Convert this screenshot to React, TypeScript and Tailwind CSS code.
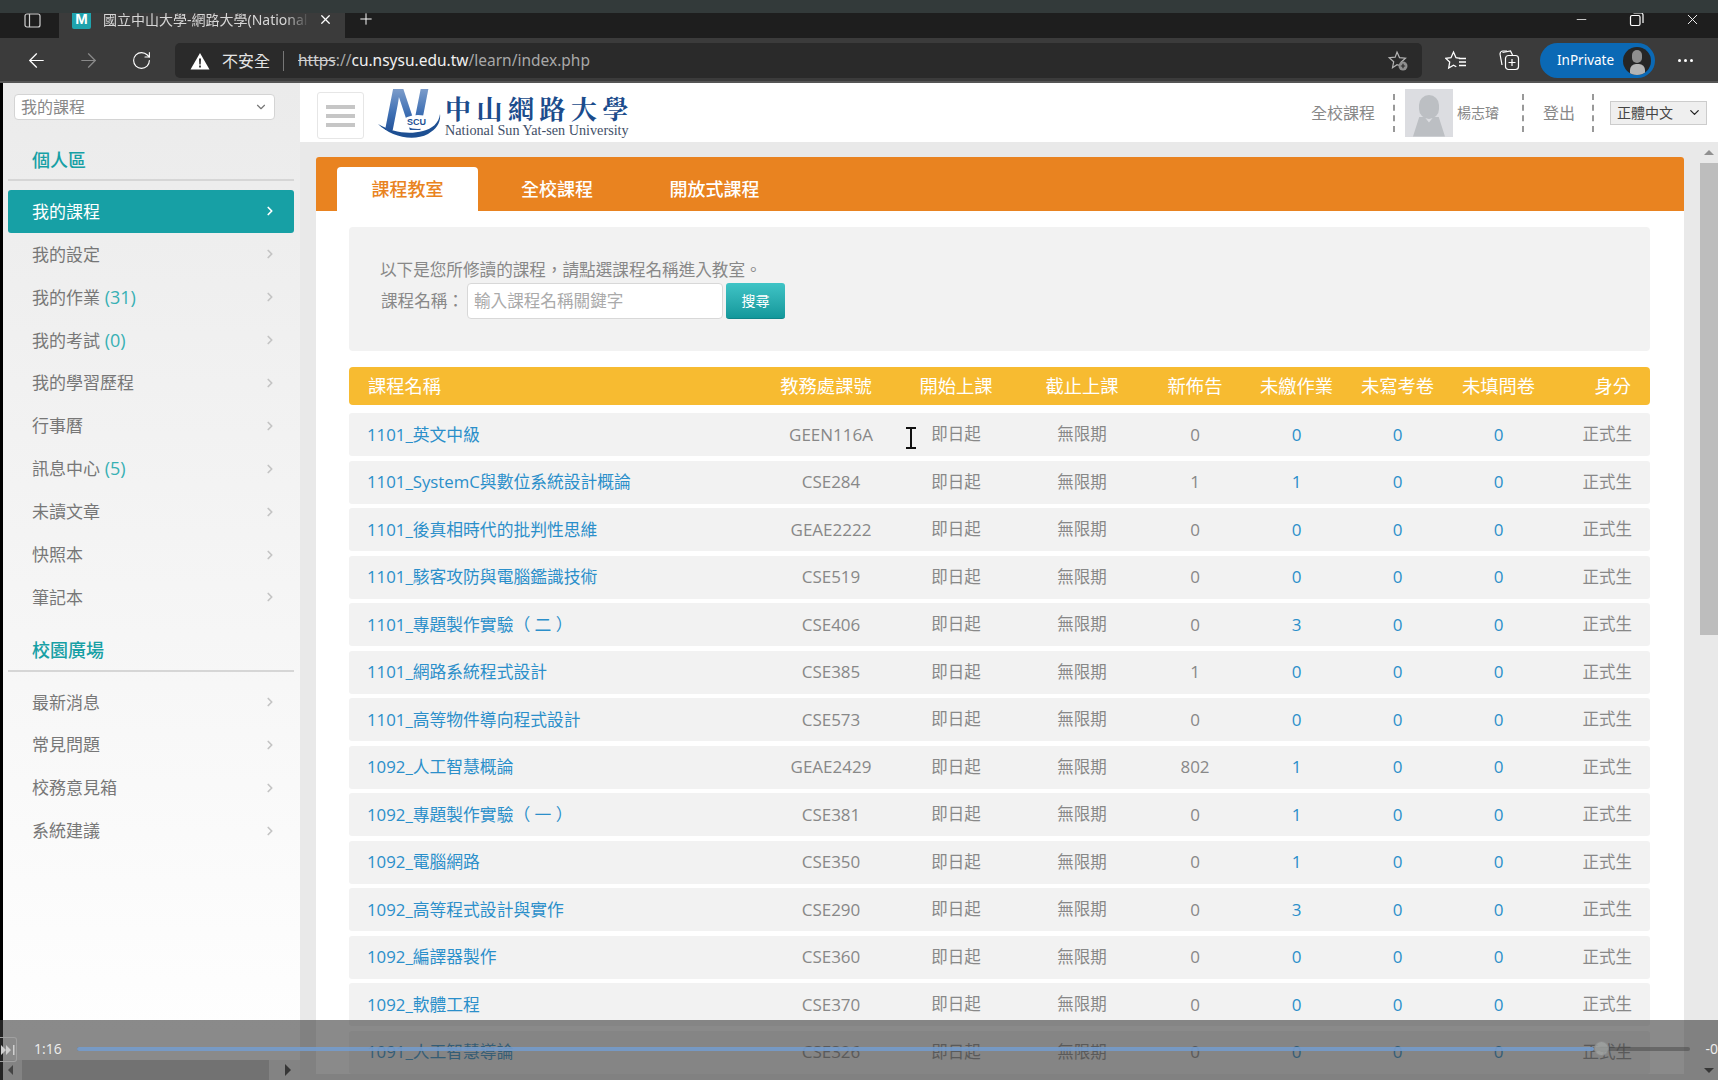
import {
  ArrowLeft,
  ArrowRight,
  ChevronDown,
  ChevronRight,
  Minus,
  Plus,
  RotateCw,
  X,
} from "lucide-react";

const cjk = `font-['Open_Sans','Noto_Sans_CJK_TC',sans-serif]`;

const personalItems = [
  { label: "我的課程", active: true },
  { label: "我的設定" },
  { label: "我的作業", count: "(31)" },
  { label: "我的考試", count: "(0)" },
  { label: "我的學習歷程" },
  { label: "行事曆" },
  { label: "訊息中心", count: "(5)" },
  { label: "未讀文章" },
  { label: "快照本" },
  { label: "筆記本" },
];

const campusItems = [
  { label: "最新消息" },
  { label: "常見問題" },
  { label: "校務意見箱" },
  { label: "系統建議" },
];

const courses = [
  { name: "1101_英文中級", code: "GEEN116A", notice: "0", hw: "0" },
  { name: "1101_SystemC與數位系統設計概論", code: "CSE284", notice: "1", hw: "1" },
  { name: "1101_後真相時代的批判性思維", code: "GEAE2222", notice: "0", hw: "0" },
  { name: "1101_駭客攻防與電腦鑑識技術", code: "CSE519", notice: "0", hw: "0" },
  { name: "1101_專題製作實驗（ 二 ）", code: "CSE406", notice: "0", hw: "3" },
  { name: "1101_網路系統程式設計", code: "CSE385", notice: "1", hw: "0" },
  { name: "1101_高等物件導向程式設計", code: "CSE573", notice: "0", hw: "0" },
  { name: "1092_人工智慧概論", code: "GEAE2429", notice: "802", hw: "1" },
  { name: "1092_專題製作實驗（ 一 ）", code: "CSE381", notice: "0", hw: "1" },
  { name: "1092_電腦網路", code: "CSE350", notice: "0", hw: "1" },
  { name: "1092_高等程式設計與實作", code: "CSE290", notice: "0", hw: "3" },
  { name: "1092_編譯器製作", code: "CSE360", notice: "0", hw: "0" },
  { name: "1092_軟體工程", code: "CSE370", notice: "0", hw: "0" },
  { name: "1091_人工智慧導論", code: "CSE326", notice: "0", hw: "0" },
];

const tableCols = "grid grid-cols-[419px_124px_128px_124px_102px_101px_101px_101px_1fr] items-center";

const SideItem = ({ label, count, active }: { label: string; count?: string; active?: boolean }) => (
  <div
    className={`ml-[5px] mr-[6px] h-[42.9px] flex items-center justify-between pl-[24px] pr-[17px] text-[17px] rounded-[3px] ${
      active ? "bg-[#17a0a5] text-white" : "text-[#777]"
    }`}
  >
    <span>
      {label}
      {count && <span className="text-[18px] text-[#37b0b4]"> {count}</span>}
    </span>
    <ChevronRight size={14} strokeWidth={3} className={active ? "text-white" : "text-[#c4c4c4]"} />
  </div>
);

const DashedLine = () => <div className="h-[38px] border-l-2 border-dashed border-[#999]" />;

const BrowserChrome = () => (
  <>
    <div className="h-[13px] bg-[#333a3a] relative z-10" />
    <div className="h-[25px] bg-[#1e1e1e] flex items-end pl-[3px] text-[#d6d6d6]">
      <svg width="18" height="16" viewBox="0 0 18 16" fill="none" stroke="#d0d0d0" strokeWidth="1.2" className="ml-[21px] mb-[9px]">
        <rect x="1" y="1" width="15" height="13" rx="2" />
        <path d="M5.5 1v13" />
      </svg>
      <div className="ml-[17px] w-[286px] h-[25px] bg-[#3b3b3b] flex items-center pb-[13px]">
        <div className="ml-[13px] w-[19px] h-[19px] shrink-0 bg-[#20a3ad] text-white text-[15px] font-bold flex items-center justify-center rounded-[2px] font-['Liberation_Sans',sans-serif]">
          M
        </div>
        <div className="ml-[12px] w-[207px] shrink-0 overflow-hidden whitespace-nowrap text-[14px] font-['Noto_Sans','Noto_Sans_CJK_TC',sans-serif] [mask-image:linear-gradient(to_right,black_88%,transparent)]">
          國立中山大學-網路大學(National Sun Yat-sen
        </div>
        <X size={15} className="ml-[8px] shrink-0 text-white" />
      </div>
      <Plus size={18} strokeWidth={1.3} className="ml-[12px] mb-[10px] text-white" />
      <div className="ml-auto flex items-center pr-[17px] mb-[10px] gap-[40px] text-white">
        <Minus size={15} strokeWidth={1.2} />
        <svg width="15" height="15" viewBox="0 0 15 15" fill="none" stroke="#fff" strokeWidth="1.2">
          <rect x="1.5" y="3.5" width="9.5" height="10" rx="1.5" />
          <path d="M4.5 1h7.5a2 2 0 0 1 2 2v8" />
        </svg>
        <X size={17} strokeWidth={1.3} />
      </div>
    </div>
    <div className="h-[45px] bg-[#3b3b3b] flex items-center pl-[3px] pt-[2px] text-white border-b-2 border-[#555]">
      <ArrowLeft size={23} strokeWidth={1.3} className="ml-[22px]" />
      <ArrowRight size={23} strokeWidth={1.3} className="ml-[29px] text-[#8a8a8a]" />
      <RotateCw size={21} strokeWidth={1.3} className="ml-[31px]" />
      <div className="ml-[23px] w-[1247px] h-[35px] bg-[#2a2a2a] rounded-[5px] flex items-center font-['Noto_Sans','Noto_Sans_CJK_TC',sans-serif] text-[15.5px]">
        <svg width="20" height="18" viewBox="0 0 20 18" className="ml-[15px]">
          <path d="M10 1L19.500 17.500H.5z" fill="#fff" />
          <path d="M9 6.500h2l-.3 6h-1.400zM9.100 13.600h1.800v1.800H9.100z" fill="#2a2a2a" />
        </svg>
        <span className="ml-[12px] text-[16px] text-[#e4e4e4]">不安全</span>
        <div className="ml-[13px] h-[20px] w-px bg-[#777]" />
        <span className="ml-[14px] text-[#a8a8a8] whitespace-nowrap">
          <span className="line-through text-[#cfcfcf]">https</span>://
          <span className="text-[#f0f0f0]">cu.nsysu.edu.tw</span>/learn/index.php
        </span>
        <svg width="22" height="22" viewBox="0 0 22 22" fill="none" stroke="#b4b4b4" strokeWidth="1.2" className="ml-auto mr-[13px]">
          <path d="M10 2l2.500 5.600 6 .6-4.500 4 1 4-5-1.500-4.500 3 1.200-6-4.500-4 6-.6z" />
          <circle cx="16" cy="16" r="4.500" fill="#8f8f8f" stroke="none" />
          <path d="M16 13.800v4.400M13.800 16h4.400" stroke="#2a2a2a" />
        </svg>
      </div>
      <svg width="23" height="22" viewBox="0 0 23 22" fill="none" stroke="#fff" strokeWidth="1.3" className="ml-[23px]">
        <path d="M15 8.300L11 7.700 8.500 2 6 7.700l-5.200.7 3.900 3.700-1 5.900 4.800-2.800 2.800 1.600" />
        <path d="M14 8.500h7M14 12h7M14 15.500h7" />
      </svg>
      <svg width="22" height="23" viewBox="0 0 22 23" fill="none" stroke="#fff" strokeWidth="1.2" className="ml-[30px]">
        <path d="M9 2H5a3 3 0 0 0-3 3l2 11" />
        <path d="M4.500 3.500l8-1.500 2 4" />
        <rect x="7.500" y="6.500" width="13" height="14" rx="3" />
        <path d="M14 10v7M10.500 13.500h7" />
      </svg>
      <div className="ml-[20px] w-[115px] h-[35px] bg-[#0b69b5] rounded-full flex items-center pl-[17px] text-[13.5px] font-['Noto_Sans',sans-serif]">
        InPrivate
        <div className="ml-auto mr-[4px] w-[28px] h-[28px] rounded-full bg-[#262626] overflow-hidden flex flex-col items-center justify-end">
          <div className="w-[10px] h-[13px] rounded-full bg-[#8e8e8e]" />
          <div className="mt-[1px] w-[15px] h-[11px] rounded-t-[6px] bg-[#b4b4b4]" />
        </div>
      </div>
      <div className="ml-[23px] flex gap-[3px]">
        <div className="w-[3px] h-[3px] rounded-full bg-white" />
        <div className="w-[3px] h-[3px] rounded-full bg-white" />
        <div className="w-[3px] h-[3px] rounded-full bg-white" />
      </div>
    </div>
  </>
);

const Logo = () => (
  <div className="ml-[14px] flex items-center">
    <svg width="64" height="54" viewBox="0 0 64 54">
      <defs>
        <linearGradient id="nfill" x1="0" y1="0" x2="0" y2="1">
          <stop offset="0" stopColor="#9db4d6" />
          <stop offset="0.55" stopColor="#3f70b4" />
          <stop offset="1" stopColor="#123f88" />
        </linearGradient>
      </defs>
      <path d="M0 38c12 12 34 18 50 10 9-5 13-12 12-20-1 9-8 15-17 17C30 49 14 46 0 38z" fill="#1d4f92" />
      <text x="6" y="44" fontFamily="Liberation Sans" fontWeight="700" fontStyle="italic" fontSize="60" fill="url(#nfill)">
        N
      </text>
      <ellipse cx="40" cy="36" rx="15" ry="7" fill="#fff" />
      <text x="29" y="39" fontFamily="Liberation Sans" fontWeight="700" fontSize="9" fill="#1d4f92">
        SCU
      </text>
    </svg>
    <div className="ml-[3px] mt-[7px] flex flex-col font-['Liberation_Serif','Noto_Sans_CJK_TC',serif]">
      <span className="text-[26px] leading-[28px] font-bold tracking-[5.500px] text-[#1b4c8c] whitespace-nowrap font-['Noto_Serif_CJK_TC','Noto_Sans_CJK_TC',serif]">
        中山網路大學
      </span>
      <span className="mt-[1px] text-[14.2px] leading-[15px] text-[#3f4f68] whitespace-nowrap">
        National Sun Yat-sen University
      </span>
    </div>
  </div>
);

const Header = () => (
  <div className="h-[59px] shrink-0 bg-white flex items-center pl-[17px] pr-[11px] text-[#888]">
    <div className="mt-[6px] w-[47px] h-[47px] border border-[#e6e6e6] rounded-[3px] flex flex-col items-center justify-center gap-[5px]">
      <div className="w-[29px] h-[4px] bg-[#c6c6c6]" />
      <div className="w-[29px] h-[4px] bg-[#c6c6c6]" />
      <div className="w-[29px] h-[4px] bg-[#c6c6c6]" />
    </div>
    <Logo />
    <div className="ml-auto flex items-center text-[16px]">
      <span>全校課程</span>
      <div className="ml-[18px]">
        <DashedLine />
      </div>
      <div className="ml-[10px] w-[48px] h-[48px] bg-[#dcdde1] flex flex-col items-center justify-end overflow-hidden">
        <div className="w-[20px] h-[24px] rounded-full bg-[#bcbfc3]" />
        <div className="mt-[-2px] w-[32px] h-[20px] bg-[#bcbfc3] [clip-path:polygon(20%_0,35%_0,50%_30%,65%_0,80%_0,100%_100%,0_100%)]" />
      </div>
      <span className="ml-[4px] text-[14px] w-[43px]">楊志璿</span>
      <div className="ml-[22px]">
        <DashedLine />
      </div>
      <span className="ml-[19px]">登出</span>
      <div className="ml-[17px]">
        <DashedLine />
      </div>
      <div className="ml-[16px] w-[97px] h-[24px] bg-[#efefef] border border-[#ccc] flex items-center justify-between pl-[6px] pr-[4px] text-[14px] text-[#444]">
        正體中文
        <ChevronDown size={15} strokeWidth={2} className="text-[#222]" />
      </div>
    </div>
  </div>
);

const CourseTable = () => (
  <div className="mt-[16px] flex flex-col gap-[4.500px]">
    <div className={`${tableCols} h-[38px] mb-[3.500px] bg-[#f7bb31] rounded-[4px] text-white text-[18.3px] text-center`}>
      <span className="pl-[19px] text-left">課程名稱</span>
      <span className="pr-[8px] whitespace-nowrap">教務處課號</span>
      <span>開始上課</span>
      <span>截止上課</span>
      <span>新佈告</span>
      <span>未繳作業</span>
      <span>未寫考卷</span>
      <span>未填問卷</span>
      <span className="pr-[19px] text-right">身分</span>
    </div>
    {courses.map((c) => (
      <div key={c.name} className={`${tableCols} h-[43px] shrink-0 bg-[#f2f2f2] rounded-[3px] text-[16.5px] text-center text-[#888]`}>
        <span className="pl-[18px] text-left text-[16.8px] text-[#2b8fca] whitespace-nowrap">{c.name}</span>
        <span className="pl-[2px] text-[17px]">{c.code}</span>
        <span>即日起</span>
        <span>無限期</span>
        <span className="text-[17px]">{c.notice}</span>
        <span className="text-[17px] text-[#2b8fca]">{c.hw}</span>
        <span className="text-[17px] text-[#2b8fca]">0</span>
        <span className="text-[17px] text-[#2b8fca]">0</span>
        <span className="pr-[18px] text-right">正式生</span>
      </div>
    ))}
  </div>
);

const Panel = () => (
  <div className="rounded-t-[3px] bg-white">
    <div className="h-[54px] bg-[#e98320] rounded-t-[3px] flex items-end pl-[21px] text-[18px] font-medium text-white">
      <div className="w-[141px] h-[44px] bg-white rounded-t-[4px] text-[#e98320] flex items-center justify-center">課程教室</div>
      <div className="w-[158px] h-[44px] flex items-center justify-center">全校課程</div>
      <div className="w-[157px] h-[44px] flex items-center justify-center">開放式課程</div>
    </div>
    <div className="pt-[16px] pl-[33px] pr-[34px]">
      <div className="h-[124px] bg-[#f2f2f2] rounded-[4px] pl-[31px] pt-[31px] text-[16.6px] text-[#888]">
        <div className="leading-[24px] h-[25px]">以下是您所修讀的課程，請點選課程名稱進入教室。</div>
        <div className="flex items-center">
          <span className="ml-[1px] w-[86px]">課程名稱：</span>
          <div className="w-[256px] h-[36px] bg-white border border-[#d8d8d8] rounded-[4px] flex items-center pl-[6px] text-[#aaa]">
            輸入課程名稱關鍵字
          </div>
          <div className="ml-[3px] w-[59px] h-[36px] rounded-[3px] bg-gradient-to-b from-[#3fc4c6] to-[#12989b] border-b border-[#0f8488] text-white text-[14px] flex items-center justify-center">
            搜尋
          </div>
        </div>
      </div>
      <CourseTable />
    </div>
  </div>
);

const VideoBar = () => (
  <div className="absolute left-0 right-0 bottom-0 h-[60px] bg-[rgba(60,60,60,0.6)] text-white">
    <div className="h-[60px] flex items-start pt-[17px]">
      <div className="w-[17px] h-[25px] border border-[#a0a0a0] border-l-0 rounded-r-[3px] flex items-center justify-center">
        <svg width="15" height="10" viewBox="0 0 15 10" fill="#d0d0d0">
          <path d="M0 0l5 5-5 5zM5 0l5 5-5 5z" />
          <path d="M12 0h1.500v10H12z" />
        </svg>
      </div>
      <span className="ml-[17px] w-[43px] text-[14px] leading-[24px] text-[#eee] font-['Open_Sans',sans-serif]">1:16</span>
      <div className="relative mt-[10px] w-[1614px] h-[4px] rounded-full bg-[rgba(70,70,70,0.5)]">
        <div className="absolute left-0 top-0 h-[4px] w-[1517px] rounded-full bg-[#7ba6dc]/80" />
        <div className="absolute left-[1517px] top-[-6px] w-[15px] h-[15px] rounded-full bg-[#a0a4a2]/80 border border-[#8a8a8a]" />
      </div>
      <span className="ml-[15px] text-[14px] leading-[24px] text-[#eee] whitespace-nowrap font-['Open_Sans',sans-serif]">-0</span>
    </div>
  </div>
);

export default function App() {
  return (
    <div lang="zh-TW" className={`relative w-[1718px] h-[1080px] overflow-hidden bg-black flex flex-col ${cjk}`}>
      <BrowserChrome />
      <div className="flex-1 min-h-0 flex pl-[3px]">
        <aside className="w-[297px] shrink-0 bg-gradient-to-b from-[#ebebeb] to-white flex flex-col">
          <div className="mt-[11px] ml-[11px] w-[261px] h-[26px] bg-white border border-[#d4d4d4] rounded-[4px] flex items-center justify-between pl-[6px] pr-[6px] text-[16px] text-[#888]">
            我的課程
            <ChevronDown size={14} className="text-[#777]" />
          </div>
          <div className="mt-[20px] ml-[5px] mr-[6px] h-[41px] pt-[7px] border-b-2 border-[#d6d6d6] pl-[24px] text-[18px] font-medium text-[#17a0a5]">
            個人區
          </div>
          <div className="mt-[9px]">
            {personalItems.map((item) => (
              <SideItem key={item.label} {...item} />
            ))}
          </div>
          <div className="ml-[5px] mr-[6px] h-[53px] flex items-end pb-[6px] border-b-2 border-[#d6d6d6] pl-[24px] text-[18px] font-medium text-[#17a0a5]">
            校園廣場
          </div>
          <div className="mt-[9px]">
            {campusItems.map((item) => (
              <SideItem key={item.label} {...item} />
            ))}
          </div>
          <div className="mt-auto h-[20px] bg-[#eeeeee] flex items-center">
            <div className="ml-[5px] w-0 h-0 border-y-[5px] border-y-transparent border-r-[5px] border-r-[#505050]" />
            <div className="ml-[9px] w-[247px] h-[20px] bg-[#c2c2c2]" />
            <div className="ml-[16px] w-0 h-0 border-y-[6px] border-y-transparent border-l-[6px] border-l-[#303030]" />
          </div>
        </aside>
        <main className="flex-1 min-w-0 flex flex-col bg-[#e9e9e9]">
          <Header />
          <div className="flex-1 min-h-0 flex">
            <div className="flex-1 min-w-0 pl-[16px] pr-[16px] pt-[15px] overflow-hidden">
              <Panel />
            </div>
            <div className="w-[18px] shrink-0 flex flex-col items-center">
              <div className="h-[21px] flex items-center">
                <div className="w-0 h-0 border-x-[5px] border-x-transparent border-b-[5px] border-b-[#909090]" />
              </div>
              <div className="w-full h-[472px] bg-[#bdbdbd]" />
              <div className="mt-auto h-[20px] flex items-center">
                <div className="w-0 h-0 border-x-[5px] border-x-transparent border-t-[5px] border-t-[#303030]" />
              </div>
            </div>
          </div>
        </main>
      </div>
      {/* mouse cursor from the recording */}
      <svg width="12" height="22" viewBox="0 0 12 22" fill="none" stroke="#111" strokeWidth="2" className="absolute left-[905px] top-[427px]">
        <path d="M1 1h10M1 21h10M6 1v20" />
      </svg>
      <VideoBar />
    </div>
  );
}
